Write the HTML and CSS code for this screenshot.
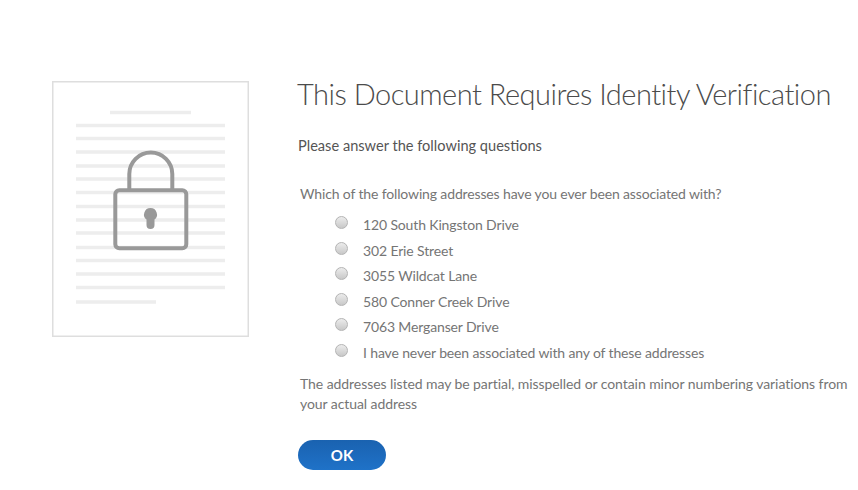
FILE: index.html
```html
<!DOCTYPE html>
<html lang="en">
<head>
<meta charset="utf-8">
<title>Identity Verification</title>
<link rel="stylesheet" href="styles.css">
</head>
<body>
<main class="page">
  <svg class="doc" width="197" height="256" viewBox="0 0 197 256" aria-hidden="true">
    <rect x="0.75" y="0.75" width="195.5" height="254.5" fill="#fff" stroke="#dedede" stroke-width="1.5"/>
    <g stroke="#ededed" stroke-width="3.5" fill="none">
      <path d="M58 31.5H139"/>
      <path d="M24 44.5H173M24 57.5H173M24 71H173M24 85H173M24 98H173M24 111.5H173M24 125.5H173M24 139H173M24 152H173M24 166.5H173M24 179.5H173M24 193H173M24 206.5H173"/>
      <path d="M24 221H104"/>
    </g>
    <g fill="none" stroke="#999" stroke-width="4">
      <path d="M77.3 108V93a21.5 21.5 0 0 1 43 0V108"/>
      <rect x="63.3" y="109.3" width="71" height="58" rx="4"/>
    </g>
    <path d="M98.500 127a6.500 6.500 0 0 1 4 11.600V144a4 4 0 0 1-8 0V138.600a6.500 6.500 0 0 1 4-11.600Z" fill="#999"/>
  </svg>
  <section class="content">
    <h1 class="title">This Document Requires Identity Verification</h1>
    <p class="lead">Please answer the following questions</p>
    <form class="quiz">
      <p class="question">Which of the following addresses have you ever been associated with?</p>
      <ul class="options">
        <li class="option"><span class="radio"></span><span>120 South Kingston Drive</span></li>
        <li class="option"><span class="radio"></span><span>302 Erie Street</span></li>
        <li class="option"><span class="radio"></span><span>3055 Wildcat Lane</span></li>
        <li class="option"><span class="radio"></span><span>580 Conner Creek Drive</span></li>
        <li class="option"><span class="radio"></span><span>7063 Merganser Drive</span></li>
        <li class="option"><span class="radio"></span><span>I have never been associated with any of these addresses</span></li>
      </ul>
      <p class="note">The addresses listed may be partial, misspelled or contain minor numbering variations from your actual address</p>
      <button class="ok" type="button">OK</button>
    </form>
  </section>
</main>
</body>
</html>
```
FILE: styles.css
```css
* { box-sizing: border-box; }
html, body { margin: 0; background: #fff; }
body { font-family: "Lato", "Noto Sans", sans-serif; overflow: hidden; }
.page { display: flex; align-items: flex-start; width: 858px; height: 490px; padding: 81px 0 0 52px; }
.doc { flex: none; display: block; margin-right: 49px; }
.content { width: 552px; }
.title { margin: -7px 0 0 -1px; font-size: 29px; line-height: 40px; font-weight: 300; color: #4b4b4b; white-space: nowrap; letter-spacing: -0.5px; }
.lead { margin: 22px 0 0; font-size: 14.6px; line-height: 20px; color: #555; }
.quiz { margin: 0; padding-left: 2px; }
.question { margin: 28px 0 0; font-size: 14px; line-height: 20px; color: #757575; letter-spacing: -0.14px; }
.options { list-style: none; margin: 8px 0 0; padding: 0 0 0 35px; }
.option { display: flex; align-items: center; gap: 15px; height: 25.5px; font-size: 14px; color: #757575; letter-spacing: -0.14px; }
.radio { flex: none; width: 13px; height: 13px; margin-top: -4px; border-radius: 50%; border: 1px solid #b4b4b4; background: linear-gradient(#ececec, #c8c8c8); }
.note { margin: 9px 0 0; width: 552px; font-size: 14px; line-height: 20px; color: #757575; letter-spacing: -0.07px; }
.ok { display: block; width: 88px; height: 30px; margin: 26px 0 0 -2px; border: 0; border-radius: 15px; background: linear-gradient(#1a62b0, #1f72c8); color: #fff; font: 700 15px "Lato", sans-serif; padding: 0; }
```
